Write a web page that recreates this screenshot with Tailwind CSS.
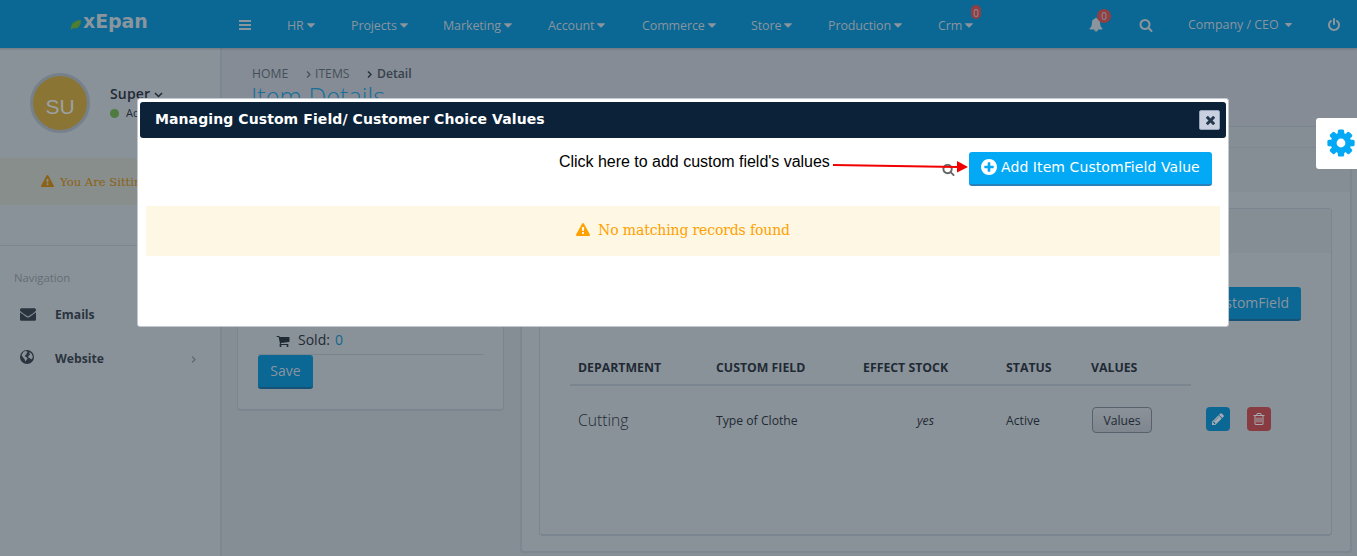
<!DOCTYPE html>
<html lang="en">
<head>
<meta charset="utf-8">
<title>xEpan - Item Details</title>
<script src="https://cdn.jsdelivr.net/npm/@tailwindcss/browser@4"></script>
</head>
<body class="w-[1357px] h-[556px] overflow-hidden relative bg-[#858c95] font-['Open_Sans',sans-serif] text-[13px] whitespace-nowrap text-[#1f2a35]">
<svg class="hidden">
  <symbol id="caret" viewBox="384 640 1024 576"><path d="M1408 704q0 26-19 45l-448 448q-19 19-45 19t-45-19l-448-448q-19-19-19-45t19-45 45-19h896q26 0 45 19t19 45z"/></symbol>
  <symbol id="search" viewBox="0 0 1792 1792"><path d="M1216 832q0-185-131.500-316.500t-316.500-131.500-316.500 131.500-131.500 316.500 131.500 316.500 316.500 131.500 316.500-131.500 131.500-316.500zm512 832q0 52-38 90t-90 38q-54 0-90-38l-343-342q-179 124-399 124-143 0-273.500-55.500t-225-150-150-225-55.500-273.500 55.500-273.500 150-225 225-150 273.500-55.500 273.500 55.500 225 150 150 225 55.500 273.500q0 220-124 399l343 343q37 37 37 90z"/></symbol>
  <symbol id="warn" viewBox="0 0 1792 1792"><path d="M1024 1375v-190q0-14-9.500-23.500t-22.500-9.500h-192q-13 0-22.500 9.500t-9.500 23.500v190q0 14 9.500 23.500t22.500 9.500h192q13 0 22.500-9.500t9.500-23.500zm-2-374l18-459q0-12-10-19-13-11-24-11h-220q-11 0-24 11-10 7-10 21l17 457q0 10 10 16.500t24 6.500h185q14 0 23.500-6.500t10.500-16.500zm-14-934l768 1408q35 63-2 126-17 29-46.500 46t-63.500 17h-1536q-34 0-63.500-17t-46.500-46q-37-63-2-126l768-1408q17-31 47-49t65-18 65 18 47 49z"/></symbol>
</svg>

<!-- Top bar -->
<header class="relative z-10 h-12 bg-[#0b6794] flex text-[#8a959e] shadow-[0_1px_2px_rgba(60,70,80,.35)]">
  <div class="w-[239px] pl-[70px] pt-[11px] flex">
    <svg class="w-3 h-[11px] mt-[8px]" viewBox="0 0 12 12"><path d="M.5 11.500C0 5 4 1.500 11.500 1c.3 6-3 10.500-9 9z" fill="#4c7b32"/><path d="M.5 11.500C3 8 6 5 10 2.500" stroke="#668d3c" fill="none" stroke-width=".5"/></svg>
    <span class="ml-[1px] font-['DejaVu_Sans'] font-bold text-[19px] leading-[20px] tracking-[-.1px]">xEpan</span>
  </div>
  <div class="w-12 pt-[20px]">
    <div class="w-3 h-[10px] flex flex-col justify-between"><i class="h-[2px] bg-[#8a959e]"></i><i class="h-[2px] bg-[#8a959e]"></i><i class="h-[2px] bg-[#8a959e]"></i></div>
  </div>
  <nav class="flex pt-[4px] items-center text-[12.500px] tracking-[-.12px]">
    <a class="w-16 flex items-center gap-[3px]">HR <svg class="w-2 h-[5px] -mt-px" fill="currentColor"><use href="#caret"/></svg></a>
    <a class="w-[92px] flex items-center gap-[3px]">Projects <svg class="w-2 h-[5px] -mt-px" fill="currentColor"><use href="#caret"/></svg></a>
    <a class="w-[105px] flex items-center gap-[3px]">Marketing <svg class="w-2 h-[5px] -mt-px" fill="currentColor"><use href="#caret"/></svg></a>
    <a class="w-[94px] flex items-center gap-[3px]">Account <svg class="w-2 h-[5px] -mt-px" fill="currentColor"><use href="#caret"/></svg></a>
    <a class="w-[109px] flex items-center gap-[3px]">Commerce <svg class="w-2 h-[5px] -mt-px" fill="currentColor"><use href="#caret"/></svg></a>
    <a class="w-[77px] flex items-center gap-[3px]">Store <svg class="w-2 h-[5px] -mt-px" fill="currentColor"><use href="#caret"/></svg></a>
    <a class="w-[110px] flex items-center gap-[3px]">Production <svg class="w-2 h-[5px] -mt-px" fill="currentColor"><use href="#caret"/></svg></a>
    <a class="relative w-[151px] flex items-center gap-[3px]">Crm <svg class="w-2 h-[5px] -mt-px" fill="currentColor"><use href="#caret"/></svg>
      <b class="absolute left-[33px] -top-[12px] w-[10px] h-[14px] rounded-[5px] bg-[#923f44] font-normal text-[10px] leading-[16px] text-center">0</b></a>
  </nav>
  <div class="relative w-[50px] pt-[17px]">
    <svg class="w-[14px] h-[15px]" viewBox="0 0 1792 1792" fill="currentColor"><path d="M912 1696q0-16-16-16-59 0-101.500-42.500t-42.500-101.500q0-16-16-16t-16 16q0 73 51.500 124.500t124.500 51.500q16 0 16-16zm816-288q0 52-38 90t-90 38h-448q0 106-75 181t-181 75-181-75-75-181h-448q-52 0-90-38t-38-90q50-42 91-88t85-119.500 74.500-158.500 50-206 19.500-260q0-152 117-282.500t307-158.500q-8-19-8-39 0-40 28-68t68-28 68 28 28 68q0 20-8 39 190 28 307 158.500t117 282.500q0 139 19.500 260t50 206 74.500 158.500 85 119.500 91 88z"/></svg>
    <b class="absolute left-[8px] top-[9px] w-[14px] h-[14px] rounded-[7px] bg-[#923f44] font-normal text-[10px] leading-[15px] text-center">0</b>
  </div>
  <div class="w-[49px] pt-[18px]"><svg class="w-[14px] h-[14px] -ml-[.5px]" fill="currentColor"><use href="#search"/></svg></div>
  <div class="w-[139px] pt-[2px] flex items-center gap-[6px] text-[12.500px] tracking-[-.03px]">Company / CEO <svg class="w-[7px] h-1" fill="currentColor"><use href="#caret"/></svg></div>
  <div class="pt-[18px]"><svg class="w-[14px] h-[14px]" viewBox="0 0 1792 1792" fill="currentColor"><path d="M1664 896q0 156-61 298t-164 245-245 164-298 61-298-61-245-164-164-245-61-298q0-182 80.500-343t226.500-270q43-32 95.500-25t83.500 50q32 42 24.500 94.500t-49.500 84.500q-98 74-151.500 181t-53.500 228q0 104 40.500 198.500t109.500 163.500 163.500 109.500 198.500 40.500 198.500-40.500 163.500-109.500 109.500-163.500 40.500-198.500q0-121-53.500-228t-151.500-181q-42-32-49.500-84.500t24.500-94.500q31-43 84-50t95 25q146 109 226.500 270t80.500 343zm-640-768v640q0 52-38 90t-90 38-90-38-38-90v-640q0-52 38-90t90-38 90 38 38 90z"/></svg></div>
</header>

<div class="flex h-[508px]">
  <!-- Sidebar -->
  <aside class="w-[222px] shrink-0 border-r-2 border-[#7d8791] bg-[#8a9299]">
    <div class="h-[110px] pl-[30px] pt-[25px] flex">
      <div class="w-[60px] h-[60px] rounded-full border-3 border-[#76818b] bg-[#8a7535] text-[#9ba1a5] font-['Liberation_Sans'] text-[21px] leading-[61px] text-center">SU</div>
      <div class="pl-5 pt-[11px]">
        <div class="flex items-center gap-1 text-sm leading-5 font-semibold tracking-[.15px]">Super <svg class="w-[9px] h-[6px] mt-px" viewBox="0 0 9 6" fill="none" stroke="currentColor" stroke-width="1.500"><path d="M1 1l3.500 3.500L8 1"/></svg></div>
        <div class="flex items-center gap-[7px] text-[11px] leading-[18px]"><i class="w-[9px] h-[9px] rounded-full bg-[#4f7b41]"></i>Active</div>
      </div>
    </div>
    <div class="h-[47px] bg-[#888e8b] pl-[41px] flex items-center gap-[6px] text-[#8b6114] font-['DejaVu_Serif'] text-[11.600px] overflow-hidden"><svg class="w-[13px] h-[13px]" fill="currentColor"><use href="#warn"/></svg><span class="mt-[2px]">You Are Sitting Idle</span></div>
    <div class="h-[41px] border-b border-[#7d8791]"></div>
    <div class="pl-[14px] pt-[24px] text-[11.300px] leading-4 text-[#646d76]">Navigation</div>
    <a class="mt-[6px] h-11 flex items-center pl-5 text-[12.200px] font-bold text-[#2a343f]">
      <svg class="w-4 h-4 mr-[19px] -mt-px" viewBox="0 0 1792 1792" fill="currentColor"><path d="M1792 710v794q0 66-47 113t-113 47h-1472q-66 0-113-47t-47-113v-794q44 49 101 87 362 246 497 345 57 42 92.500 65.500t94.500 48 110 24.500h2q51 0 110-24.500t94.500-48 92.500-65.500q170-123 498-345 57-39 100-87zm0-294q0 79-49 151t-122 123q-376 261-468 325-10 7-42.500 31t-54 38.500-52 32.500-57.500 27-50 9h-2q-23 0-50-9t-57.500-27-52-32.500-54-38.500-42.500-31q-91-64-262-182.500t-205-142.500q-62-42-117-115.500t-55-136.500q0-78 41.500-130t118.500-52h1472q65 0 112.500 47t47.500 113z"/></svg><span class="mt-[2px]">Emails</span></a>
    <a class="h-11 flex items-center pl-5 text-[12.200px] font-bold text-[#2a343f]">
      <svg class="w-[14px] h-[14px] mr-[21px] -mt-[2px]" viewBox="0 0 14 14"><circle cx="7" cy="7" r="7" fill="#2a343f"/><path d="M3.800 1.500L6.500 1l1 1.500-1.200.6.700 1-1.500.6-.8 1.500 1.500.7 1.300 1.300-1 1.800-1.200 1.500-.8-2.500L3 7.500 1.500 5zM9 2.300l2 .8 1.500 2.400.3 2-1.500 2-1.300-1.300-1.800-.8.400-2 1.500-.6z" fill="#8a9299"/></svg><span class="mt-[2px] w-[49px]">Website</span>
      <svg class="ml-[87px] mt-[2px] w-[5px] h-[7px]" viewBox="0 0 5 7" fill="none" stroke="#5f6973" stroke-width="1.200"><path d="M1 .5l3 3-3 3"/></svg></a>
  </aside>

  <!-- Content -->
  <main class="grow flex flex-col">
    <div class="h-[79px] border-b border-[#7b858f] pl-[30px] pt-[17px]">
      <div class="flex items-center text-[12.200px] leading-[18px] text-[#444f59]"><span class="w-[37px]">HOME</span>
        <svg class="ml-[17px] mr-[4px] w-[5px] h-[7px]" viewBox="0 0 5 7" fill="none" stroke="currentColor" stroke-width="1.200"><path d="M1 .5l3 3-3 3"/></svg><span class="w-[35px]">ITEMS</span>
        <svg class="ml-[17px] mr-[5px] w-[5px] h-[7px]" viewBox="0 0 5 7" fill="none" stroke="#2a343f" stroke-width="1.500"><path d="M1 .5l3 3-3 3"/></svg><b class="font-semibold text-[#36414b]">Detail</b></div>
      <h1 class="font-light text-[25.200px] leading-[31px] text-[#176f9a] -mt-[2px] -ml-px">Item Details</h1>
    </div>
    <div class="grow flex bg-[#868e95] pt-5 pl-[15px]">
      <section class="w-[267px] h-[264px] rounded-[4px] border border-[#7b858f] border-b-2 bg-[#8a9299] pl-5 pt-[182px]">
        <div class="w-[226px] h-[25px] border-b border-[#7b858f] pl-[18px] pb-[5px] flex items-center text-[14px]"><svg class="w-[14px] h-[14px] mr-[7px] mt-[3px]" viewBox="0 0 1792 1792" fill="currentColor"><path d="M704 1536q0 52-38 90t-90 38-90-38-38-90 38-90 90-38 90 38 38 90zm896 0q0 52-38 90t-90 38-90-38-38-90 38-90 90-38 90 38 38 90zm128-1088v512q0 24-16.500 42.500t-40.500 21.500l-1044 122q13 60 13 70 0 16-24 64h920q26 0 45 19t19 45-19 45-45 19h-1024q-26 0-45-19t-19-45q0-11 8-31.500t16-36 21.500-40 15.500-29.500l-177-823h-204q-26 0-45-19t-19-45 19-45 45-19h256q16 0 28.500 6.500t19.500 15.500 13 24.500 8 26 5.500 29.500 4.500 26h1201q26 0 45 19t19 45z"/></svg><span class="w-[33px] ml-px">Sold:</span><span class="ml-1 text-[#14658d]">0</span></div>
        <button class="block w-[55px] h-[34px] rounded-[3px] border-b-2 border-[#165277] bg-[#0b6794] text-[#8a959e] text-[14px] pb-[1px]">Save</button>
      </section>
      <section class="ml-4 w-[832px] h-[406px] rounded-[4px] border-2 border-t border-[#7d8791] bg-[#8a9299]">
        <div class="h-[44px] bg-[#868e95]"></div>
        <div class="ml-[17px] mt-4 w-[793px] h-[328px] rounded-[4px] border border-b-2 border-[#7b858f]">
          <div class="h-[44px] bg-[#868e95]"></div>
          <div class="flex justify-end pt-[34px] pr-[30px]"><button class="w-[160px] h-[34px] rounded-[3px] border-b-2 border-[#165277] bg-[#0b6794] text-[#8a959e] text-[14px] text-right pr-3 pb-[2px]">Add CustomField</button></div>
          <div class="ml-[30px] mt-[30px] w-[621px] h-[35px] border-b-2 border-[#7b858f] pl-2 pt-[2px] flex items-center text-[12.300px] font-bold">
            <span class="w-[138px]">DEPARTMENT</span><span class="w-[147px]">CUSTOM FIELD</span><span class="w-[143px]">EFFECT STOCK</span><span class="w-[85px]">STATUS</span><span>VALUES</span>
          </div>
          <div class="ml-[38px] h-[68px] flex items-center text-[12.200px]">
            <span class="w-[138px] mt-[2px] font-light text-[15.700px]">Cutting</span><span class="w-[201px] mt-[3px]">Type of Clothe</span><i class="w-[89px] mt-[3px]">yes</i><span class="w-[86px] mt-[3px]">Active</span>
            <button class="w-[60px] h-[26px] rounded-[4px] border border-[#59626c] bg-linear-to-b from-[#8b9299] to-[#7f868e] mr-[54px] pt-[3px]">Values</button>
            <span class="w-6 h-6 -mt-[2px] mr-[17px] rounded-[4px] bg-[#0b6794] flex items-center justify-center"><svg class="w-[14px] h-[14px]" viewBox="0 0 1792 1792" fill="#a5abb0"><path d="M491 1536l91-91-235-235-91 91v107h128v128h107zm523-928q0-22-22-22-10 0-17 7l-542 542q-7 7-7 17 0 22 22 22 10 0 17-7l542-542q7-7 7-17zm-54-192l416 416-832 832h-416v-416zm683 96q0 53-37 90l-166 166-416-416 166-165q36-38 90-38 53 0 91 38l235 234q37 39 37 91z"/></svg></span>
            <span class="w-6 h-6 -mt-[2px] rounded-[4px] bg-[#883c41] flex items-center justify-center"><svg class="w-[14px] h-[14px]" viewBox="0 0 1792 1792" fill="#a5abb0"><path d="M704 736v576q0 14-9 23t-23 9h-64q-14 0-23-9t-9-23v-576q0-14 9-23t23-9h64q14 0 23 9t9 23zm256 0v576q0 14-9 23t-23 9h-64q-14 0-23-9t-9-23v-576q0-14 9-23t23-9h64q14 0 23 9t9 23zm256 0v576q0 14-9 23t-23 9h-64q-14 0-23-9t-9-23v-576q0-14 9-23t23-9h64q14 0 23 9t9 23zm128 724v-948h-896v948q0 22 7 40.500t14.500 27 10.500 8.500h832q3 0 10.500-8.500t14.500-27 7-40.500zm-672-1076h448l-48-117q-7-9-17-11h-317q-10 2-17 11zm928 32v64q0 14-9 23t-23 9h-96v948q0 83-47 143.500t-113 60.500h-832q-66 0-113-58.500t-47-141.500v-952h-96q-14 0-23-9t-9-23v-64q0-14 9-23t23-9h309l70-167q15-37 54-63t79-26h320q40 0 79 26t54 63l70 167h309q14 0 23 9t9 23z"/></svg></span>
          </div>
        </div>
      </section>
    </div>
  </main>
</div>

<!-- Settings tab -->
<div class="absolute z-20 left-[1316px] top-[118px] w-[50px] h-[51px] rounded-[3px] bg-white pl-[11px] pt-[11px]">
  <svg class="w-7 h-7" viewBox="0 0 28 28"><g fill="#03a9f4"><circle cx="14" cy="14" r="10.300"/><g id="teeth"><rect x="10.800" y=".4" width="6.400" height="27.200" rx="1.500"/><rect x=".4" y="10.800" width="27.200" height="6.400" rx="1.500"/></g><use href="#teeth" transform="rotate(45 14 14)"/></g><circle cx="14" cy="14" r="4.400" fill="#fff"/></svg>
</div>

<!-- Dialog -->
<div class="absolute z-20 left-[137px] top-[98px] w-[1092px] h-[229px] rounded-[3px] border border-[#c3c9d1] bg-white">
  <div class="mx-[2px] mt-[3px] h-9 rounded-[3px] bg-[#0b2239] pl-[15px] pr-[6px] flex items-center justify-between">
    <h2 class="font-['DejaVu_Sans'] font-bold text-[14px] tracking-[.09px] text-white -mt-[2px]">Managing Custom Field/ Customer Choice Values</h2>
    <button class="w-[21px] h-5 rounded-[2px] border border-[#94a3b8] bg-[#c9d1e0] flex items-center justify-center"><svg class="w-[9px] h-[9px] ml-[2px] mt-px" viewBox="0 0 9 9" stroke="#24384e" stroke-width="3"><path d="M.8.8l7.400 7.400M8.200.8L.8 8.200"/></svg></button>
  </div>
  <div class="h-[68px] flex pt-[14px] pl-[421px] text-black">
    <span class="w-[383px] font-['Liberation_Sans'] text-[16px] leading-[19px] tracking-[-.02px]">Click here to add custom field's values</span>
    <svg class="w-[13px] h-[13px] mt-[11px] mr-[14px]" fill="#666"><use href="#search"/></svg>
    <button class="w-[243px] h-[34px] rounded-[3px] border-b-2 border-[#2a80b9] bg-[#03a9f4] text-white font-['DejaVu_Sans'] text-[14px] tracking-[.08px] flex items-center pl-[12px] pb-[2px] gap-[4px]"><svg class="w-4 h-4 shrink-0" viewBox="128 128 1536 1536" fill="currentColor"><path d="M1344 960v-128q0-26-19-45t-45-19h-256v-256q0-26-19-45t-45-19h-128q-26 0-45 19t-19 45v256h-256q-26 0-45 19t-19 45v128q0 26 19 45t45 19h256v256q0 26 19 45t45 19h128q26 0 45-19t19-45v-256h256q26 0 45-19t19-45zm320-64q0 209-103 385.500t-279.500 279.500-385.500 103-385.500-103-279.500-279.500-103-385.500 103-385.500 279.500-279.500 385.500-103 385.500 103 279.500 279.500 103 385.500z"/></svg>Add Item CustomField Value</button>
  </div>
  <div class="ml-[8px] w-[1074px] h-[50px] bg-[#fef7e3] text-[#ffa000] font-['DejaVu_Serif'] text-[14px] tracking-[-.14px] flex items-center justify-center gap-2 pb-[2px]"><svg class="w-[14px] h-[14px]" fill="currentColor"><use href="#warn"/></svg>No matching records found</div>
  <svg class="absolute left-[695px] top-[60px] w-[136px] h-4" viewBox="0 0 136 16"><path d="M0 6L124 8" stroke="#f00000" stroke-width="2"/><path d="M124 2l11 6-11 5.500z" fill="#f00000"/></svg>
</div>
</body>
</html>
